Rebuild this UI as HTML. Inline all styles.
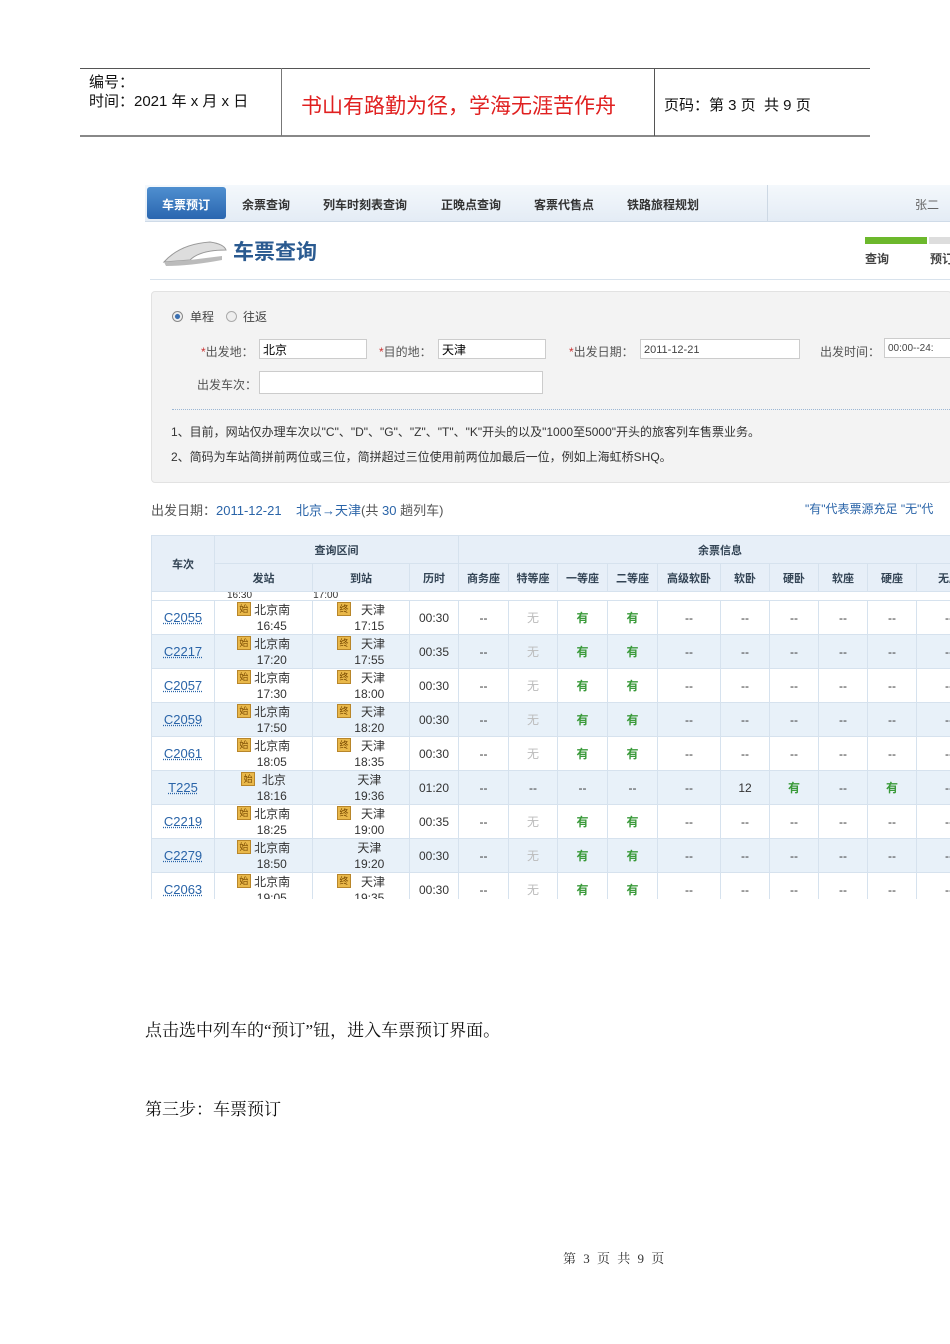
<!DOCTYPE html>
<html><head><meta charset="utf-8"><style>
body{margin:0;width:950px;height:1344px;background:#fff;position:relative;overflow:hidden;font-family:"Liberation Sans","Noto Sans CJK SC",sans-serif;}
.a{position:absolute;white-space:nowrap;}
.hd{font-size:15px;color:#111;}
.nav span{position:absolute;top:196px;font-size:12px;color:#333;font-weight:bold;}
table{border-collapse:collapse;table-layout:fixed;position:absolute;left:151px;top:535px;font-size:12px;}
td{border:1px solid #d6e2ee;text-align:center;padding:0;color:#333;overflow:hidden;white-space:nowrap;}
thead td{background:#e7eff8;font-weight:bold;color:#345;font-size:11px;height:27px;}
tbody td{height:33px;}
tr.b td{background:#e8f1f9;}
.tn{color:#2a64a8;text-decoration:underline dotted;font-size:13px;}
.st{line-height:16px;font-size:12px;}
.ic{display:inline-block;width:12px;height:12px;background:#e9b84a;border:1px solid #b8862a;font-size:9px;line-height:12px;color:#7a4a00;vertical-align:top;}
.g{color:#3a9a3a;font-weight:bold;}
.w{color:#bbb;}
.inp{position:absolute;height:20px;border:1px solid #ccc;background:#fff;font-size:12px;line-height:20px;padding-left:3px;box-sizing:border-box;white-space:nowrap;overflow:hidden;}
.lb{position:absolute;font-size:12px;color:#555;white-space:nowrap;}
.lb i{color:#c33;font-style:normal;}
</style></head><body>
<div class="a" style="left:80px;top:68px;width:790px;height:1px;background:#555"></div>
<div class="a" style="left:80px;top:135px;width:790px;height:2px;background:#888"></div>
<div class="a" style="left:281px;top:68px;width:1px;height:68px;background:#777"></div>
<div class="a" style="left:654px;top:68px;width:1px;height:68px;background:#555"></div>
<div class="a hd" style="left:89px;top:71px">编号：</div>
<div class="a hd" style="left:89px;top:90px">时间：2021 年 x 月 x 日</div>
<div class="a" style="left:301px;top:90px;font-size:21px;color:#e02020">书山有路勤为径，学海无涯苦作舟</div>
<div class="a hd" style="left:664px;top:94px">页码：第 3 页&nbsp; 共 9 页</div>

<div class="a" style="left:145px;top:185px;width:805px;height:36px;background:linear-gradient(#f4f8fc,#e4ecf5);border-bottom:1px solid #cfdbe8"></div>
<div class="a" style="left:147px;top:187px;width:79px;height:32px;background:linear-gradient(#4f8fd0,#2a66b0);border-radius:3px"></div>
<div class="a" style="left:767px;top:185px;width:1px;height:36px;background:#cdd8e4"></div>
<div class="nav">
<span style="left:162px;color:#fff">车票预订</span>
<span style="left:242px">余票查询</span>
<span style="left:323px">列车时刻表查询</span>
<span style="left:441px">正晚点查询</span>
<span style="left:534px">客票代售点</span>
<span style="left:627px">铁路旅程规划</span>
<span style="left:915px;font-weight:normal;color:#666">张二</span>
</div>
<svg class="a" style="left:160px;top:236px" width="70" height="32"><path d="M4 26 Q20 8 50 6 Q64 8 66 14 Q40 14 30 24 Z" fill="#ddd" stroke="#999"/><path d="M4 26 L30 24 L62 20 L62 24 Q30 30 6 30Z" fill="#bbb"/></svg>
<div class="a" style="left:233px;top:236px;font-size:21px;font-weight:bold;color:#2a5a90">车票查询</div>
<div class="a" style="left:865px;top:237px;width:62px;height:7px;background:#6cb82c"></div>
<div class="a" style="left:929px;top:237px;width:21px;height:7px;background:#ddd"></div>
<div class="a" style="left:865px;top:250px;font-size:12px;font-weight:bold;color:#444">查询</div>
<div class="a" style="left:930px;top:250px;font-size:12px;font-weight:bold;color:#444">预订</div>
<div class="a" style="left:150px;top:279px;width:800px;height:1px;background:#d8e2ec"></div>
<div class="a" style="left:151px;top:291px;width:799px;height:190px;background:#f3f3f3;border:1px solid #e2e2e2;border-radius:4px"></div>
<div class="a" style="left:172px;top:311px;width:9px;height:9px;border-radius:50%;border:1px solid #888;background:radial-gradient(#3a6fb0 35%,#eee 45%)"></div>
<div class="lb" style="left:190px;top:308px;color:#444">单程</div>
<div class="a" style="left:226px;top:311px;width:9px;height:9px;border-radius:50%;border:1px solid #aaa;background:#eee"></div>
<div class="lb" style="left:243px;top:308px;color:#444">往返</div>
<div class="lb" style="left:201px;top:343px"><i>*</i>出发地：</div>
<div class="inp" style="left:259px;top:339px;width:108px">北京</div>
<div class="lb" style="left:379px;top:343px"><i>*</i>目的地：</div>
<div class="inp" style="left:438px;top:339px;width:108px">天津</div>
<div class="lb" style="left:569px;top:343px"><i>*</i>出发日期：</div>
<div class="inp" style="left:640px;top:339px;width:160px;font-size:11px;color:#444">2011-12-21</div>
<div class="lb" style="left:820px;top:343px">出发时间：</div>
<div class="inp" style="left:884px;top:338px;width:70px;font-size:10px;color:#444">00:00--24:</div>
<div class="lb" style="left:197px;top:376px">出发车次：</div>
<div class="inp" style="left:259px;top:371px;width:284px;height:23px"></div>
<div class="a" style="left:172px;top:409px;width:778px;border-top:1px dotted #9bb6d4"></div>
<div class="lb" style="left:171px;top:423px;color:#333">1、目前，网站仅办理车次以"C"、"D"、"G"、"Z"、"T"、"K"开头的以及"1000至5000"开头的旅客列车售票业务。</div>
<div class="lb" style="left:171px;top:448px;color:#333">2、简码为车站简拼前两位或三位，简拼超过三位使用前两位加最后一位，例如上海虹桥SHQ。</div>
<div class="lb" style="left:151px;top:500px;font-size:13px">出发日期：<span style="color:#2a64a8">2011-12-21</span>&nbsp;&nbsp;&nbsp; <span style="color:#2a64a8">北京→天津</span>(共 <span style="color:#2a64a8">30</span> 趟列车)</div>
<div class="lb" style="left:805px;top:500px;color:#2a64a8">"有"代表票源充足 "无"代</div>
<div class="a" style="left:151px;top:535px;width:799px;height:364px;overflow:hidden">
<table style="left:0;top:0;width:830px">
<colgroup><col style="width:63px"><col style="width:98px"><col style="width:97px"><col style="width:49px"><col style="width:50px"><col style="width:49px"><col style="width:50px"><col style="width:50px"><col style="width:63px"><col style="width:49px"><col style="width:49px"><col style="width:49px"><col style="width:49px"><col style="width:65px"></colgroup>
<thead>
<tr><td rowspan="2">车次</td><td colspan="3">查询区间</td><td colspan="10">余票信息</td></tr>
<tr><td>发站</td><td>到站</td><td>历时</td><td>商务座</td><td>特等座</td><td>一等座</td><td>二等座</td><td>高级软卧</td><td>软卧</td><td>硬卧</td><td>软座</td><td>硬座</td><td>无座</td></tr>
</thead>
<tbody>
<tr><td colspan="14" style="height:8px;line-height:8px;font-size:10px;text-align:left;padding-left:75px;color:#333">16:30 &nbsp;&nbsp;&nbsp;&nbsp;&nbsp;&nbsp;&nbsp;&nbsp;&nbsp;&nbsp;&nbsp;&nbsp;&nbsp;&nbsp;&nbsp;&nbsp;&nbsp;&nbsp;&nbsp;&nbsp; 17:00</td></tr>
<tr><td class="tn">C2055</td><td class="st"><span class="ic">始</span> 北京南<br>&nbsp;&nbsp;&nbsp;&nbsp;&nbsp;16:45</td><td class="st"><span class="ic">终</span> &nbsp; 天津<br>&nbsp;&nbsp;&nbsp;&nbsp;&nbsp;17:15</td><td>00:30</td><td>--</td><td class="w">无</td><td class="g">有</td><td class="g">有</td><td>--</td><td>--</td><td>--</td><td>--</td><td>--</td><td>--</td></tr>
<tr class="b"><td class="tn">C2217</td><td class="st"><span class="ic">始</span> 北京南<br>&nbsp;&nbsp;&nbsp;&nbsp;&nbsp;17:20</td><td class="st"><span class="ic">终</span> &nbsp; 天津<br>&nbsp;&nbsp;&nbsp;&nbsp;&nbsp;17:55</td><td>00:35</td><td>--</td><td class="w">无</td><td class="g">有</td><td class="g">有</td><td>--</td><td>--</td><td>--</td><td>--</td><td>--</td><td>--</td></tr>
<tr><td class="tn">C2057</td><td class="st"><span class="ic">始</span> 北京南<br>&nbsp;&nbsp;&nbsp;&nbsp;&nbsp;17:30</td><td class="st"><span class="ic">终</span> &nbsp; 天津<br>&nbsp;&nbsp;&nbsp;&nbsp;&nbsp;18:00</td><td>00:30</td><td>--</td><td class="w">无</td><td class="g">有</td><td class="g">有</td><td>--</td><td>--</td><td>--</td><td>--</td><td>--</td><td>--</td></tr>
<tr class="b"><td class="tn">C2059</td><td class="st"><span class="ic">始</span> 北京南<br>&nbsp;&nbsp;&nbsp;&nbsp;&nbsp;17:50</td><td class="st"><span class="ic">终</span> &nbsp; 天津<br>&nbsp;&nbsp;&nbsp;&nbsp;&nbsp;18:20</td><td>00:30</td><td>--</td><td class="w">无</td><td class="g">有</td><td class="g">有</td><td>--</td><td>--</td><td>--</td><td>--</td><td>--</td><td>--</td></tr>
<tr><td class="tn">C2061</td><td class="st"><span class="ic">始</span> 北京南<br>&nbsp;&nbsp;&nbsp;&nbsp;&nbsp;18:05</td><td class="st"><span class="ic">终</span> &nbsp; 天津<br>&nbsp;&nbsp;&nbsp;&nbsp;&nbsp;18:35</td><td>00:30</td><td>--</td><td class="w">无</td><td class="g">有</td><td class="g">有</td><td>--</td><td>--</td><td>--</td><td>--</td><td>--</td><td>--</td></tr>
<tr class="b"><td class="tn">T225</td><td class="st"><span class="ic">始</span> &nbsp;北京<br>&nbsp;&nbsp;&nbsp;&nbsp;&nbsp;18:16</td><td class="st">&nbsp;&nbsp;&nbsp;&nbsp;&nbsp;天津<br>&nbsp;&nbsp;&nbsp;&nbsp;&nbsp;19:36</td><td>01:20</td><td>--</td><td>--</td><td>--</td><td>--</td><td>--</td><td>12</td><td class="g">有</td><td>--</td><td class="g">有</td><td>--</td></tr>
<tr><td class="tn">C2219</td><td class="st"><span class="ic">始</span> 北京南<br>&nbsp;&nbsp;&nbsp;&nbsp;&nbsp;18:25</td><td class="st"><span class="ic">终</span> &nbsp; 天津<br>&nbsp;&nbsp;&nbsp;&nbsp;&nbsp;19:00</td><td>00:35</td><td>--</td><td class="w">无</td><td class="g">有</td><td class="g">有</td><td>--</td><td>--</td><td>--</td><td>--</td><td>--</td><td>--</td></tr>
<tr class="b"><td class="tn">C2279</td><td class="st"><span class="ic">始</span> 北京南<br>&nbsp;&nbsp;&nbsp;&nbsp;&nbsp;18:50</td><td class="st">&nbsp;&nbsp;&nbsp;&nbsp;&nbsp;天津<br>&nbsp;&nbsp;&nbsp;&nbsp;&nbsp;19:20</td><td>00:30</td><td>--</td><td class="w">无</td><td class="g">有</td><td class="g">有</td><td>--</td><td>--</td><td>--</td><td>--</td><td>--</td><td>--</td></tr>
<tr><td class="tn">C2063</td><td class="st"><span class="ic">始</span> 北京南<br>&nbsp;&nbsp;&nbsp;&nbsp;&nbsp;19:05</td><td class="st"><span class="ic">终</span> &nbsp; 天津<br>&nbsp;&nbsp;&nbsp;&nbsp;&nbsp;19:35</td><td>00:30</td><td>--</td><td class="w">无</td><td class="g">有</td><td class="g">有</td><td>--</td><td>--</td><td>--</td><td>--</td><td>--</td><td>--</td></tr>
</tbody></table></div>

<div class="a" style="left:145px;top:1016px;font-size:17px;font-family:'Liberation Serif','Noto Serif CJK SC',serif;color:#111">点击选中列车的“预订”钮，进入车票预订界面。</div>
<div class="a" style="left:145px;top:1095px;font-size:17px;font-family:'Liberation Serif','Noto Serif CJK SC',serif;color:#111">第三步：车票预订</div>
<div class="a" style="left:563px;top:1248px;font-size:13px;letter-spacing:2px;font-family:'Liberation Serif','Noto Serif CJK SC',serif;color:#333">第 3 页 共 9 页</div>
</body></html>
